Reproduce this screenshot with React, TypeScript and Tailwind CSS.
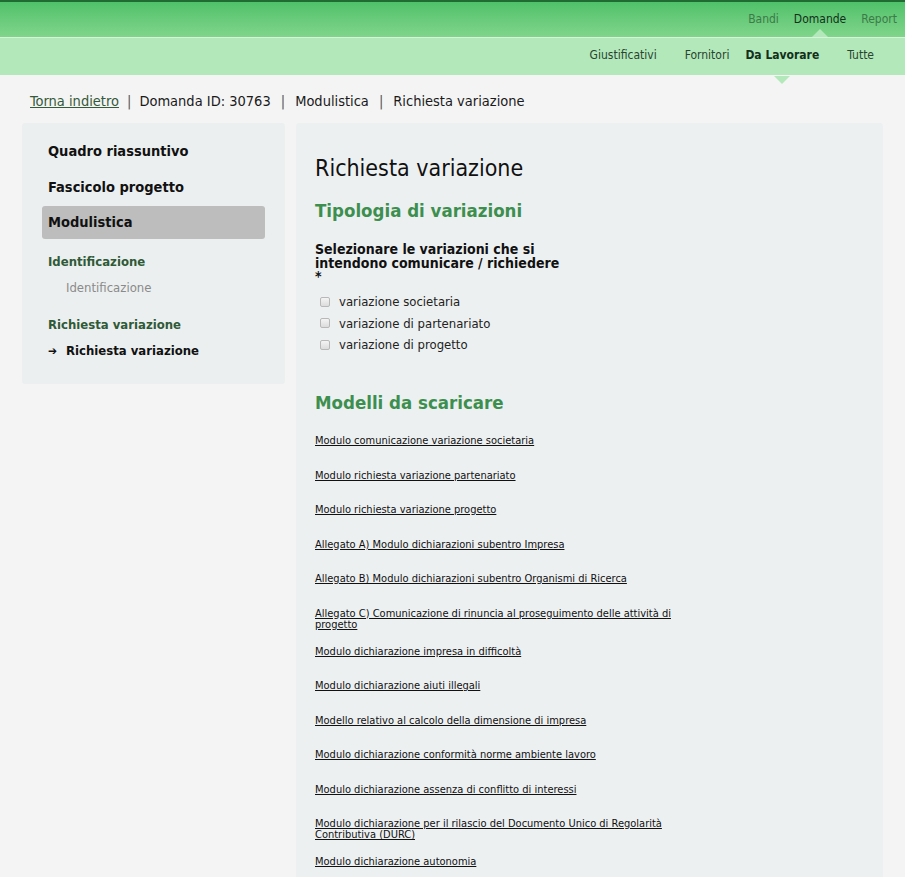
import React from "react";

const font = { fontFamily: '"DejaVu Sans Condensed", "DejaVu Sans", Tahoma, sans-serif' };

type Link = { text: string; two?: boolean };
const links: Link[] = [
  { text: "Modulo comunicazione variazione societaria" },
  { text: "Modulo richiesta variazione partenariato" },
  { text: "Modulo richiesta variazione progetto" },
  { text: "Allegato A) Modulo dichiarazioni subentro Impresa" },
  { text: "Allegato B) Modulo dichiarazioni subentro Organismi di Ricerca" },
  { text: "Allegato C) Comunicazione di rinuncia al proseguimento delle attività di progetto", two: true },
  { text: "Modulo dichiarazione impresa in difficoltà" },
  { text: "Modulo dichiarazione aiuti illegali" },
  { text: "Modello relativo al calcolo della dimensione di impresa" },
  { text: "Modulo dichiarazione conformità norme ambiente lavoro" },
  { text: "Modulo dichiarazione assenza di conflitto di interessi" },
  { text: "Modulo dichiarazione per il rilascio del Documento Unico di Regolarità Contributiva (DURC)", two: true },
  { text: "Modulo dichiarazione autonomia" },
];

function Checkbox() {
  return (
    <span className="inline-block w-[10px] h-[10px] rounded-[2px] border border-[#b8b8b8] bg-gradient-to-b from-[#f4f4f4] to-[#dcdcdc]" />
  );
}

export default function App() {
  return (
    <div className="min-h-[877px] bg-[#f4f4f4] text-[#1a1a1a]" style={font}>
      {/* top bar */}
      <div className="h-[2px] bg-[#1f6b31]" />
      <div className="relative h-[35px] bg-gradient-to-b from-[#4fc16b] to-[#80d58b] flex items-center justify-end pr-[8px] text-[12px]">
        <div className="flex gap-[15px] pb-[1px]">
          <span className="text-[#3d7a48]">Bandi</span>
          <span className="relative text-[#13301b]">
            Domande
            <span className="absolute left-1/2 -translate-x-1/2 top-[19px] w-0 h-0 border-l-[8px] border-r-[8px] border-b-[8px] border-l-transparent border-r-transparent border-b-[#b3e8ba]" />
          </span>
          <span className="text-[#3d7a48]">Report</span>
        </div>
      </div>
      <div className="h-px bg-[#d7f3da]" />
      <div className="relative h-[37px] bg-[#b3e8ba] flex items-center justify-end pr-[31px] text-[12px]">
        <div className="flex pb-[4px]">
          <span className="text-[#2a4430]">Giustificativi</span>
          <span className="ml-[28px] text-[#2a4430]">Fornitori</span>
          <span className="ml-[16px] relative font-bold text-[#13301b]">
            Da Lavorare
            <span className="absolute left-1/2 -translate-x-1/2 top-[30px] w-0 h-0 border-l-[8px] border-r-[8px] border-t-[8px] border-l-transparent border-r-transparent border-t-[#b3e8ba]" />
          </span>
          <span className="ml-[28px] text-[#2a4430]">Tutte</span>
        </div>
      </div>

      {/* breadcrumb */}
      <div className="pl-[30px] pt-[17px] pb-[12px] text-[14.5px] leading-[19px] text-[#1a1a1a]">
        <span className="underline text-[#345a3a]">Torna indietro</span>
        <span className="mx-[8px] text-[#555]">|</span>
        <span>Domanda ID: 30763</span>
        <span className="mx-[10px] text-[#555]">|</span>
        <span>Modulistica</span>
        <span className="mx-[10px] text-[#555]">|</span>
        <span>Richiesta variazione</span>
      </div>

      <div className="flex gap-[11px] px-[22px] items-start">
        {/* sidebar */}
        <div className="w-[263px] shrink-0 bg-[#eceff0] rounded-[3px] px-[20px] pt-[12px] pb-[25px]">
          <div className="h-[33px] mb-[3px] px-[6px] flex items-center text-[14.5px] font-bold text-[#111]">Quadro riassuntivo</div>
          <div className="h-[33px] mb-[2px] px-[6px] flex items-center text-[14.5px] font-bold text-[#111]">Fascicolo progetto</div>
          <div className="h-[33px] px-[6px] flex items-center text-[14.5px] font-bold text-[#111] bg-[#bdbdbd] rounded-[3px]">Modulistica</div>
          <div className="px-[6px] mt-[15px] text-[13px] leading-[16px] font-bold text-[#2f5a37]">Identificazione</div>
          <div className="pl-[24px] mt-[10px] text-[13px] leading-[16px] text-[#8a8a8a]">Identificazione</div>
          <div className="px-[6px] mt-[21px] text-[13px] leading-[16px] font-bold text-[#2f5a37]">Richiesta variazione</div>
          <div className="px-[6px] mt-[10px] text-[13px] leading-[16px] font-bold text-[#111] flex items-center">
            <span className="w-[18px] text-[12px]">➔</span>
            <span>Richiesta variazione</span>
          </div>
        </div>

        {/* main */}
        <div className="flex-1 bg-[#edf0f1] rounded-[3px] pl-[19px] pr-[20px] pt-[31px] pb-[20px] min-h-[760px]">
          <h1 className="text-[23px] leading-[29px] text-[#111]">Richiesta variazione</h1>
          <h2 className="mt-[16px] text-[18.5px] leading-[24px] font-bold text-[#3c8f4e]">Tipologia di variazioni</h2>
          <div className="mt-[19px] w-[250px] text-[14px] leading-[14px] font-bold text-[#111]">
            Selezionare le variazioni che si intendono comunicare / richiedere
            <div className="-mt-px">*</div>
          </div>
          <div className="mt-[10px] flex flex-col gap-[4.5px] text-[13px] leading-[17px] text-[#222]">
            {["variazione societaria", "variazione di partenariato", "variazione di progetto"].map((t) => (
              <label key={t} className="flex items-center">
                <span className="w-[24px] pl-[5px] flex items-center"><Checkbox /></span>
                <span>{t}</span>
              </label>
            ))}
          </div>

          <h2 className="mt-[38px] text-[18.5px] leading-[24px] font-bold text-[#3c8f4e]">Modelli da scaricare</h2>
          <div className="mt-[20px] w-[380px] text-[11px] leading-[11px] text-[#111]">
            {links.map((l) => (
              <div key={l.text} className={l.two ? "h-[38px]" : "h-[34.5px]"}>
                <span className="underline">{l.text}</span>
              </div>
            ))}
          </div>
        </div>
      </div>
    </div>
  );
}
